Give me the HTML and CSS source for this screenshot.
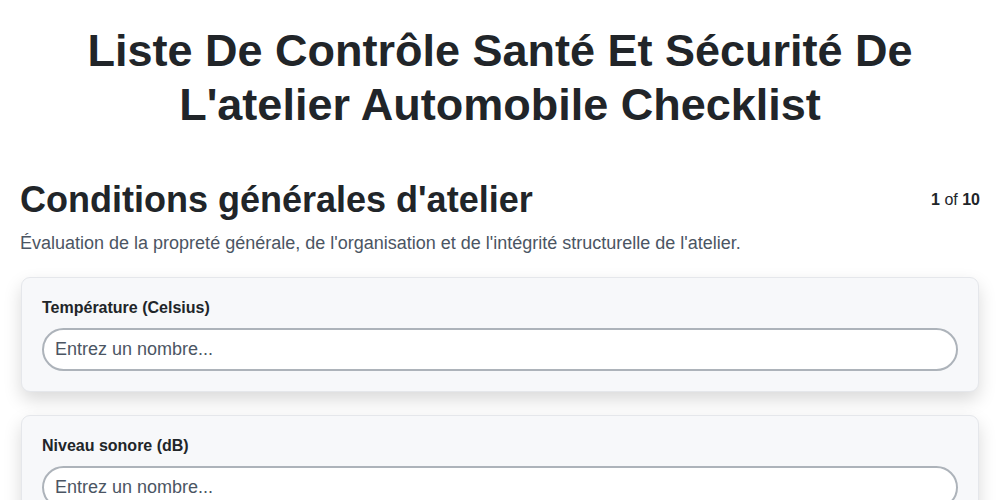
FILE: index.html
```html
<!DOCTYPE html>
<html lang="fr">
    <head>
        <meta charset="UTF-8">
        <meta name="viewport" content="width=device-width, initial-scale=1.0">
        <title>Checklist</title>
        <link rel="stylesheet" href="styles.css">
    </head>
    <body>
        <div class="page">
            <!-- Title -->
            <h1 class="title">
                Liste De Contrôle Santé Et Sécurité De L'atelier Automobile Checklist
            </h1>

            <!-- Section header -->
            <div class="section-head">
                <h2 class="section-title">Conditions générales d'atelier</h2>
                <div class="step"><b>1</b> of <b>10</b></div>
            </div>
            <p class="section-desc">
                Évaluation de la propreté générale, de l'organisation et de l'intégrité structurelle de l'atelier.
            </p>

            <!-- Questions -->
            <div class="card">
                <label class="label" for="q1">Température (Celsius)</label>
                <input class="input" id="q1" type="number" placeholder="Entrez un nombre...">
            </div>

            <div class="card">
                <label class="label" for="q2">Niveau sonore (dB)</label>
                <input class="input" id="q2" type="number" placeholder="Entrez un nombre...">
            </div>
        </div>
    </body>
</html>
```

FILE: styles.css
```css
body {
    margin: 0;
    background-color: #ffffff;
    color: #212529;
    font-family: "Liberation Sans", Arial, sans-serif;
}

.page {
    padding: 0 20px;
}

.title {
    font-size: 45px;
    line-height: 1.2;
    font-weight: bold;
    text-align: center;
    margin: 24px 0 0;
}

.section-head {
    display: flex;
    justify-content: space-between;
    align-items: center;
    margin-top: 46px;
}

.section-title {
    font-size: 36px;
    line-height: 1.2;
    font-weight: bold;
    margin: 0;
}

.step {
    font-size: 16px;
    line-height: 1.5;
}

.section-desc {
    font-size: 18px;
    line-height: 27px;
    color: #4b5563;
    margin: 9px 0 20px;
}

.card {
    background-color: #f7f8fa;
    border: 1px solid #e5e7eb;
    border-radius: 9px;
    padding: 20px;
    margin: 0 1px 23px;
    box-shadow: 0 8px 18px rgba(0, 0, 0, 0.15);
}

.label {
    display: block;
    font-size: 16px;
    line-height: 20px;
    font-weight: bold;
    margin-bottom: 10px;
}

.input {
    display: block;
    box-sizing: border-box;
    width: 100%;
    height: 43px;
    padding: 0 11px;
    border: 2px solid #adb3ba;
    border-radius: 22px;
    background-color: #ffffff;
    font-family: inherit;
    font-size: 18px;
    color: #212529;
    outline: none;
}

.input::placeholder {
    color: #4b5563;
}
```
